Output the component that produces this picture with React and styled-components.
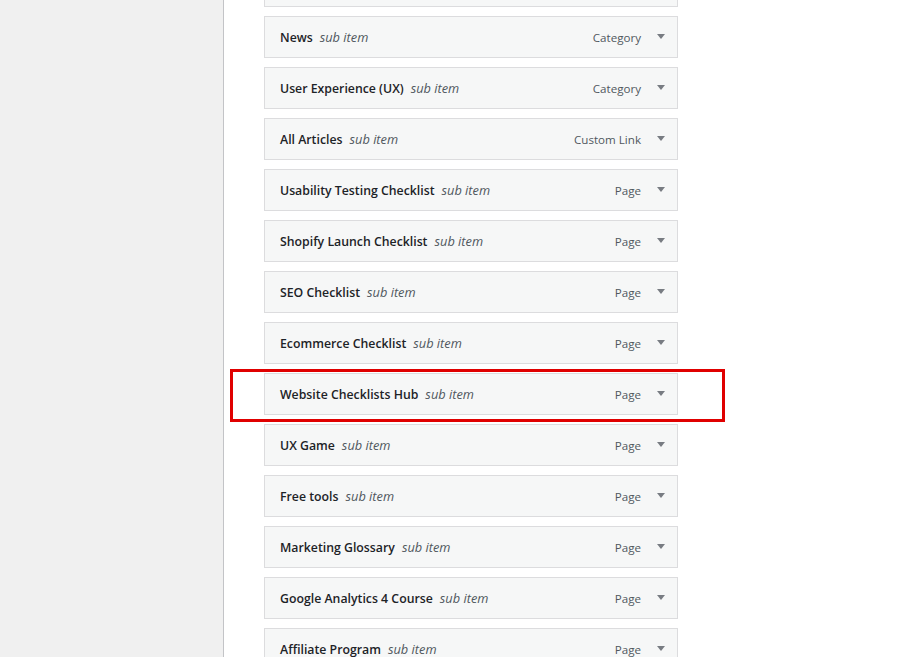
import React from 'react'
import styled, {createGlobalStyle} from 'styled-components'

const GlobalStyle = createGlobalStyle`
  html, body {
    margin: 0;
    padding: 0;
    background: #fff;
    overflow: hidden;
  }
  body {
    font-family: "Open Sans", "Noto Sans", sans-serif;
    color: #1d2327;
  }
`

const items = [
    {title: 'News', type: 'Category'},
    {title: 'User Experience (UX)', type: 'Category'},
    {title: 'All Articles', type: 'Custom Link'},
    {title: 'Usability Testing Checklist', type: 'Page'},
    {title: 'Shopify Launch Checklist', type: 'Page'},
    {title: 'SEO Checklist', type: 'Page'},
    {title: 'Ecommerce Checklist', type: 'Page'},
    {title: 'Website Checklists Hub', type: 'Page', marked: true},
    {title: 'UX Game', type: 'Page'},
    {title: 'Free tools', type: 'Page'},
    {title: 'Marketing Glossary', type: 'Page'},
    {title: 'Google Analytics 4 Course', type: 'Page'},
    {title: 'Affiliate Program', type: 'Page'},
]

const Arrow = () => (
    <svg width="8" height="5" viewBox="0 0 8 5">
        <path d="M0 0 L8 0 L4 5 Z" fill="#787c82" />
    </svg>
)

export default function App() {
    return (
        <>
            <GlobalStyle />
            <Page>
                <Sidebar />
                <Content>
                    <MenuList>
                        {/* item scrolled above the viewport, only its bottom edge shows */}
                        <MenuItem>
                            <Handle />
                        </MenuItem>
                        {items.map((item, i) => (
                            <MenuItem key={i}>
                                <Handle>
                                    <Title>
                                        <Label>{item.title}</Label>
                                        <SubItem>sub item</SubItem>
                                    </Title>
                                    <Controls>
                                        <ItemType>{item.type}</ItemType>
                                        <EditToggle><Arrow /></EditToggle>
                                    </Controls>
                                </Handle>
                                {item.marked && <Highlight />}
                            </MenuItem>
                        ))}
                    </MenuList>
                </Content>
            </Page>
        </>
    )
}

const Page = styled.div`
  display: flex;
  height: 657px;
  overflow: hidden;
`

const Sidebar = styled.div`
  width: 223px;
  flex-shrink: 0;
  background: #f0f0f0;
  border-right: 1px solid #c3c4c7;
`

const Content = styled.div`
  flex: 1;
  background: #fff;
  padding-left: 40px;
`

const MenuList = styled.ul`
  list-style: none;
  margin: -35px 0 0 0;
  padding: 0;
  width: 414px;
`

const MenuItem = styled.li`
  position: relative;
  margin-bottom: 9px;
`

const Handle = styled.div`
  display: flex;
  align-items: center;
  justify-content: space-between;
  height: 40px;
  padding: 0 12px 0 15px;
  background: #f6f7f7;
  border: 1px solid #dcdcde;
`

const Title = styled.div`
  display: flex;
  align-items: baseline;
  gap: 7px;
`

const Label = styled.span`
  font-size: 12.3px;
  font-weight: 600;
  color: #1d2327;
`

const SubItem = styled.span`
  font-size: 12.8px;
  font-style: italic;
  color: #50575e;
`

const Controls = styled.div`
  display: flex;
  align-items: center;
  gap: 16px;
`

const ItemType = styled.span`
  font-size: 11.6px;
  color: #50575e;
`

const EditToggle = styled.span`
  display: flex;
  align-items: center;
  width: 8px;
  margin-top: -2px;
`

const Highlight = styled.div`
  position: absolute;
  left: -34px;
  top: -4px;
  width: 489px;
  height: 47px;
  border: 3px solid #e00000;
  pointer-events: none;
`
